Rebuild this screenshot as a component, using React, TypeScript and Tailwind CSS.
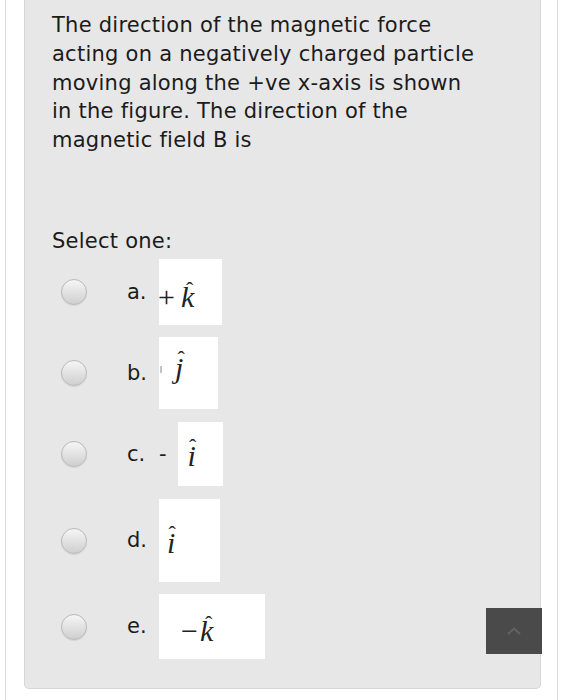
import type { ReactNode } from "react";

function Hat({ children, hatClass = "" }: { children: ReactNode; hatClass?: string }) {
  return (
    <span className="relative inline-block">
      {children}
      <span
        className={`absolute left-1/2 -translate-x-1/2 not-italic text-[22px] leading-none ${hatClass}`}
      >
        ˆ
      </span>
    </span>
  );
}

interface Option {
  letter: string;
  prefix?: string;
  box: string;
  content: ReactNode;
  gap: string;
}

const options: Option[] = [
  {
    letter: "a.",
    box: "w-[63px] h-[66px] pt-[23px] pl-0",
    gap: "mt-0",
    content: (
      <>
        <span className="not-italic -ml-[1px] mr-[6px]">+</span>
        <Hat hatClass="top-[-3px] ml-[2px]">k</Hat>
      </>
    ),
  },
  {
    letter: "b.",
    box: "w-[59px] h-[72px] pl-[16px] pt-[16px]",
    gap: "mt-[12px]",
    content: (
      <>
        <span className="absolute left-[1px] top-[29px] h-[7px] w-[2px] bg-[#c4c4c4]" />
        <Hat hatClass="top-[-5px] ml-[2px]">j</Hat>
      </>
    ),
  },
  {
    letter: "c.",
    prefix: "-",
    box: "w-[45px] h-[64px] pl-[10px] pt-[19px]",
    gap: "mt-[13px]",
    content: <Hat hatClass="top-[-5px] ml-[1px]">i</Hat>,
  },
  {
    letter: "d.",
    box: "w-[61px] h-[83px] pl-[8px] pt-[29px]",
    gap: "mt-[13px]",
    content: <Hat hatClass="top-[-5px] ml-[1px]">i</Hat>,
  },
  {
    letter: "e.",
    box: "w-[106px] h-[65px] pl-[22px] pt-[22px]",
    gap: "mt-[12px]",
    content: (
      <>
        <span className="not-italic mr-[2px]">−</span>
        <Hat hatClass="top-[-3px] ml-[2px]">k</Hat>
      </>
    ),
  },
];

function Radio() {
  return (
    <span className="block h-[26px] w-[26px] shrink-0 rounded-full border border-[#b9b9b9] bg-gradient-to-b from-[#f6f6f6] to-[#cfcfcf] shadow-[0_1px_1px_rgba(0,0,0,0.08)]" />
  );
}

export default function App() {
  return (
    <div className="relative min-h-[700px] bg-white font-['DejaVu_Sans',sans-serif] text-[#1b1b1b]">
      <div className="ml-[5px] min-h-[700px] w-[553px] border-x border-[#dcdcdc] pl-[18px] pr-[16px]">
        <div className="rounded-b-[5px] border border-t-0 border-[#d6d6d6] bg-[#e7e7e7] pb-[29px] pl-[27px]">
          <p className="pt-[11px] text-[21px] leading-[28.75px] tracking-[0.25px]">
            The direction of the magnetic force
            <br />
            acting on a negatively charged particle
            <br />
            moving along the +ve x-axis is shown
            <br />
            in the figure. The direction of the
            <br />
            magnetic field B is
          </p>

          <p className="mt-[72px] text-[21px] leading-[28.75px] tracking-[0.25px]">Select one:</p>

          <div className="mt-[3.5px] ml-[9px]">
            {options.map((o) => (
              <div key={o.letter} className={`flex items-center ${o.gap}`}>
                <Radio />
                <span className="ml-[40px] w-[32px] text-[21px] leading-none">{o.letter}</span>
                {o.prefix && (
                  <span className="mr-[11px] text-[21px] leading-none">{o.prefix}</span>
                )}
                <span
                  className={`relative block shrink-0 whitespace-nowrap bg-white font-['Liberation_Serif',serif] text-[30px] italic leading-[30px] text-[#222] ${o.box}`}
                >
                  {o.content}
                </span>
              </div>
            ))}
          </div>
        </div>
      </div>

      <button
        type="button"
        className="absolute left-[486px] top-[608px] flex h-[46px] w-[56px] items-center justify-center bg-[#4a4a4a]"
      >
        <svg width="14" height="8" viewBox="0 0 14 8" fill="none">
          <path d="M1 7 L7 1.5 L13 7" stroke="#636363" strokeWidth="2" />
        </svg>
      </button>
    </div>
  );
}
